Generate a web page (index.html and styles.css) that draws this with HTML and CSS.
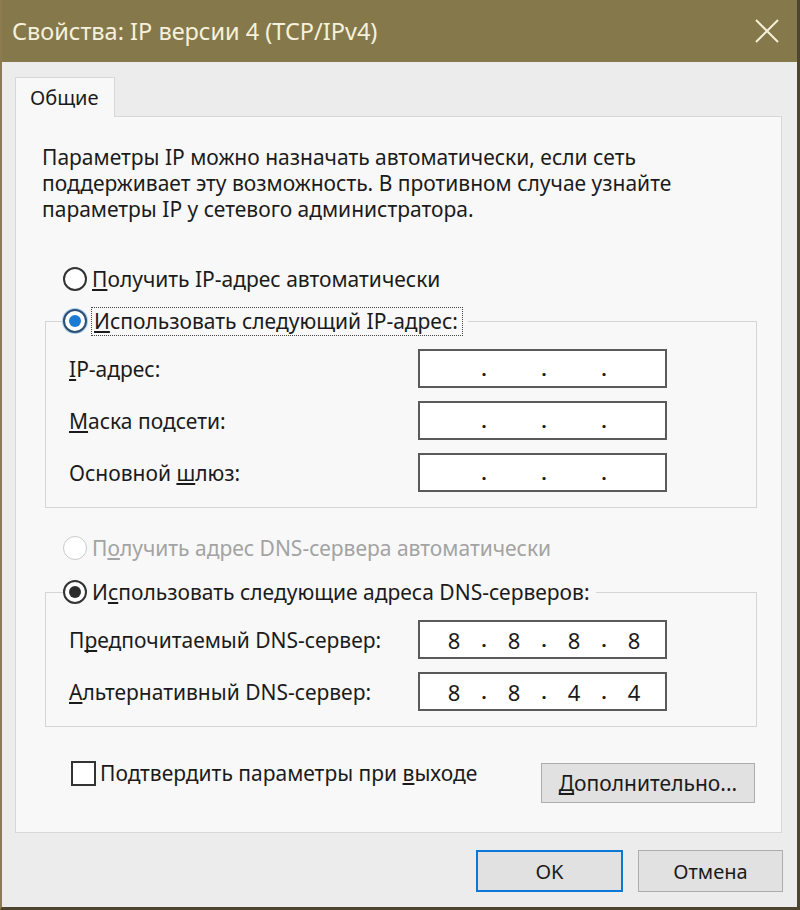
FILE: index.html
```html
<!DOCTYPE html>
<html lang="ru">
<head>
    <meta charset="UTF-8">
    <meta name="viewport" content="width=device-width, initial-scale=1.0">
    <title>Свойства: IP версии 4 (TCP/IPv4)</title>
    <link rel="stylesheet" href="styles.css">
</head>
<body>
<div class="window">
    <div class="titlebar">
        <span class="title">Свойства: IP версии 4 (TCP/IPv4)</span>
        <svg class="close" width="26" height="26" viewBox="0 0 26 26">
            <path d="M2 2 L24 24 M24 2 L2 24" stroke="#f4efd8" stroke-width="2" fill="none"/>
        </svg>
    </div>

    <div class="client">
        <div class="tabs">
            <div class="tab">Общие</div>
        </div>

        <div class="panel">
            <p class="intro">Параметры IP можно назначать автоматически, если сеть
                поддерживает эту возможность. В противном случае узнайте
                параметры IP у сетевого администратора.</p>

            <div class="option first">
                <span class="radio"></span>
                <span><u>П</u>олучить IP-адрес автоматически</span>
            </div>

            <div class="group">
                <div class="option legend">
                    <span class="radio checked"></span>
                    <span class="focus"><u>И</u>спользовать следующий IP-адрес:</span>
                </div>
                <div class="field">
                    <span><u>I</u>P-адрес:</span>
                    <div class="ip"><span></span><i>.</i><span></span><i>.</i><span></span><i>.</i><span></span></div>
                </div>
                <div class="field">
                    <span><u>М</u>аска подсети:</span>
                    <div class="ip"><span></span><i>.</i><span></span><i>.</i><span></span><i>.</i><span></span></div>
                </div>
                <div class="field">
                    <span>Основной <u>ш</u>люз:</span>
                    <div class="ip"><span></span><i>.</i><span></span><i>.</i><span></span><i>.</i><span></span></div>
                </div>
            </div>

            <div class="option disabled">
                <span class="radio"></span>
                <span>П<u>о</u>лучить адрес DNS-сервера автоматически</span>
            </div>

            <div class="group dns">
                <div class="option legend">
                    <span class="radio dark"></span>
                    <span>И<u>с</u>пользовать следующие адреса DNS-серверов:</span>
                </div>
                <div class="field">
                    <span>П<u>р</u>едпочитаемый DNS-сервер:</span>
                    <div class="ip"><span>8</span><i>.</i><span>8</span><i>.</i><span>8</span><i>.</i><span>8</span></div>
                </div>
                <div class="field">
                    <span><u>А</u>льтернативный DNS-сервер:</span>
                    <div class="ip"><span>8</span><i>.</i><span>8</span><i>.</i><span>4</span><i>.</i><span>4</span></div>
                </div>
            </div>

            <div class="bottom-row">
                <label class="check"><span class="box"></span><span>Подтвердить параметры при <u>в</u>ыходе</span></label>
                <button class="btn more"><span><u>Д</u>ополнительно...</span></button>
            </div>
        </div>

        <div class="footer">
            <button class="btn ok">OK</button>
            <button class="btn">Отмена</button>
        </div>
    </div>
</div>
</body>
</html>
```

FILE: styles.css
```css
body {
    margin: 0;
    font-family: "Noto Sans", "Open Sans", sans-serif;
    color: #1b1b1b;
    overflow: hidden;
}
u {
    text-decoration: underline;
    text-decoration-skip-ink: none;
    text-underline-offset: 2px;
}
.window {
    width: 800px;
    height: 910px;
    box-sizing: border-box;
    border-left: 2px solid #8a7c50;
    border-right: 3px solid #4e4530;
    border-bottom: 3px solid #4e4530;
    display: flex;
    flex-direction: column;
}
.titlebar {
    height: 62px;
    flex: none;
    background-color: #85784a;
    display: flex;
    align-items: center;
    justify-content: space-between;
    padding: 0 17px 0 10px;
}
.title {
    color: #f6f1dc;
    font-size: 23.5px;
}
.client {
    flex: 1;
    background-color: #ececec;
    padding: 15px 15px 0 13px;
}
.tabs {
    display: flex;
}
.tab {
    position: relative;
    z-index: 1;
    width: 100px;
    height: 40px;
    box-sizing: border-box;
    border: 1px solid #d7d7d7;
    border-bottom: none;
    background-color: #f8f8f8;
    font-size: 20px;
    line-height: 40px;
    padding-left: 14px;
    margin-bottom: -1px;
}
.panel {
    height: 717px;
    box-sizing: border-box;
    border: 1px solid #d7d7d7;
    background-color: #f8f8f8;
    padding: 27px 24px 0 29px;
    font-size: 21px;
}
.intro {
    margin: 0 0 0 -3px;
    line-height: 26px;
    width: 680px;
}
.option {
    display: flex;
    align-items: center;
    height: 28px;
    gap: 5px;
}
.option.first {
    margin: 43px 0 28px 18px;
}
.option.disabled {
    color: #a3a3a3;
    margin: 26px 0 0 18px;
}
.radio {
    width: 24px;
    height: 24px;
    flex: none;
    box-sizing: border-box;
    border: 2px solid #333;
    border-radius: 50%;
    background-color: #fff;
    display: flex;
    align-items: center;
    justify-content: center;
}
.radio.checked {
    border-color: #2d4f72;
    box-shadow: 0 0 0 1px #a9cdee;
}
.radio.checked::after,
.radio.dark::after {
    content: "";
    width: 12px;
    height: 12px;
    border-radius: 50%;
    background-color: #1a7ad4;
}
.radio.dark::after {
    background-color: #2b2b2b;
}
.disabled .radio {
    border: 1px solid #cacaca;
}
.focus {
    outline: 1px dotted #444;
    padding: 0 4px 0 2px;
    line-height: 27px;
}
.group {
    border: 1px solid #d5d5d5;
    padding: 0 0 15px 23px;
}
.group.dns {
    margin-top: 30px;
}
.legend {
    margin: -15px 0 14px -6px;
    background-color: #f8f8f8;
    width: max-content;
    padding: 0 6px 0 0;
}
.field {
    display: flex;
    align-items: center;
    justify-content: space-between;
    padding-right: 89px;
}
.field + .field {
    margin-top: 13px;
}
.ip {
    width: 249px;
    height: 39px;
    box-sizing: border-box;
    border: 2px solid #5a5a5a;
    background-color: #fff;
    display: flex;
    align-items: center;
    padding-left: 10px;
    font-size: 22px;
}
.ip span {
    width: 48px;
    text-align: center;
}
.ip i {
    width: 12px;
    text-align: center;
    font-style: normal;
    font-weight: bold;
    font-size: 18px;
}
.bottom-row {
    display: flex;
    justify-content: space-between;
    align-items: flex-start;
    margin: 33px 2px 0 26px;
}
.check {
    display: flex;
    align-items: center;
    gap: 4px;
    height: 26px;
}
.box {
    width: 25px;
    height: 25px;
    box-sizing: border-box;
    border: 2px solid #333;
    background-color: #fff;
}
.btn {
    font-family: inherit;
    font-size: 20px;
    color: #1b1b1b;
    height: 40px;
    border: 1px solid #adadad;
    background-color: #e1e1e1;
    padding: 0;
}
.more {
    width: 214px;
    margin-top: 3px;
    font-size: 21px;
}
.footer {
    display: flex;
    justify-content: flex-end;
    gap: 15px;
    margin-top: 17px;
    margin-right: -1px;
}
.footer .btn {
    width: 145px;
    height: 42px;
}
.footer .ok {
    border: 2px solid #0a78d4;
    width: 147px;
}
```
